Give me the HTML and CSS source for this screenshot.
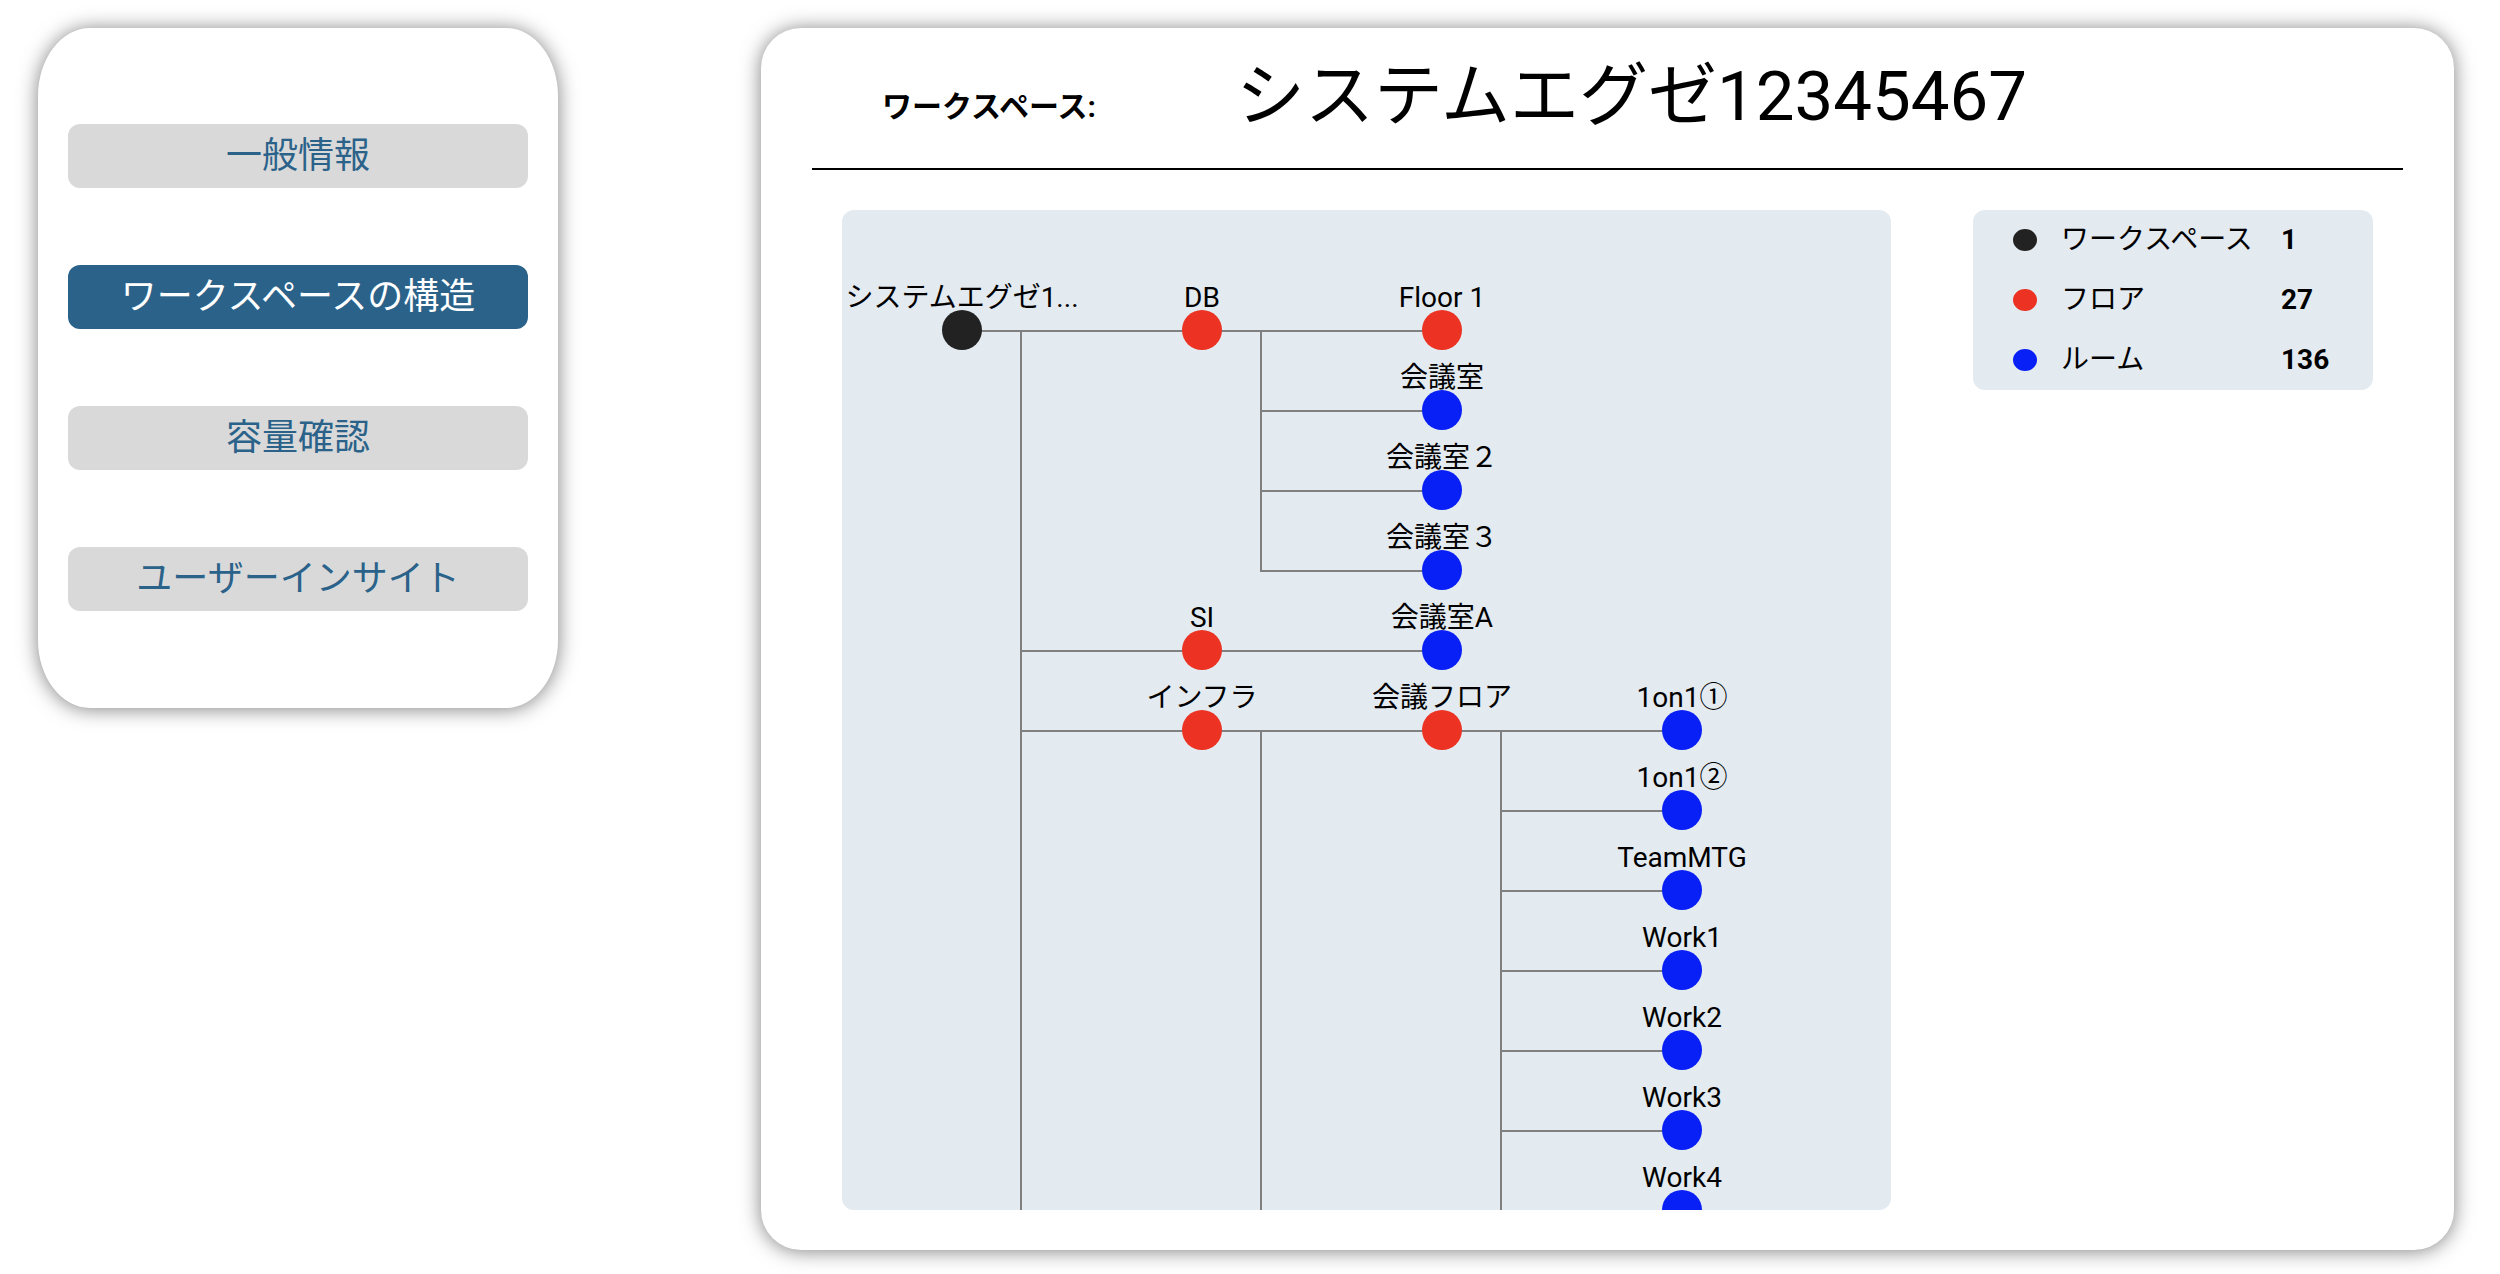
FILE: index.html
```html
<!DOCTYPE html>
<html lang="ja">
<head>
  <meta charset="utf-8">
  <meta name="viewport" content="width=device-width, initial-scale=1">
  <title>ワークスペースの構造</title>
  <link rel="stylesheet" href="styles.css">
</head>
<body>
  <div class="layout">
    <nav class="card menu">
      <button class="menu-item" type="button">一般情報</button>
      <button class="menu-item is-active" type="button" aria-current="page">ワークスペースの構造</button>
      <button class="menu-item" type="button">容量確認</button>
      <button class="menu-item" type="button">ユーザーインサイト</button>
    </nav>

    <main class="card panel">
      <header class="panel-header">
        <h2 class="panel-label">ワークスペース:</h2>
        <h1 class="panel-title">システムエグゼ12345467</h1>
      </header>

      <div class="panel-body">
        <section class="tree">
          <ul class="tree-root">
            <li>
              <div class="node workspace"><span class="label">システムエグゼ1...</span></div>
              <ul>
                <li>
                  <div class="node floor"><span class="label">DB</span></div>
                  <ul>
                    <li><div class="node floor"><span class="label">Floor 1</span></div></li>
                    <li><div class="node room"><span class="label">会議室</span></div></li>
                    <li><div class="node room"><span class="label">会議室２</span></div></li>
                    <li><div class="node room"><span class="label">会議室３</span></div></li>
                  </ul>
                </li>
                <li>
                  <div class="node floor"><span class="label">SI</span></div>
                  <ul>
                    <li><div class="node room"><span class="label">会議室A</span></div></li>
                  </ul>
                </li>
                <li class="continues">
                  <div class="node floor"><span class="label">インフラ</span></div>
                  <ul>
                    <li class="continues">
                      <div class="node floor"><span class="label">会議フロア</span></div>
                      <ul>
                        <li><div class="node room"><span class="label">1on1①</span></div></li>
                        <li><div class="node room"><span class="label">1on1②</span></div></li>
                        <li><div class="node room"><span class="label">TeamMTG</span></div></li>
                        <li><div class="node room"><span class="label">Work1</span></div></li>
                        <li><div class="node room"><span class="label">Work2</span></div></li>
                        <li><div class="node room"><span class="label">Work3</span></div></li>
                        <li><div class="node room"><span class="label">Work4</span></div></li>
                      </ul>
                    </li>
                  </ul>
                </li>
              </ul>
            </li>
          </ul>
        </section>

        <dl class="legend">
          <div class="legend-row workspace"><dt>ワークスペース</dt><dd>1</dd></div>
          <div class="legend-row floor"><dt>フロア</dt><dd>27</dd></div>
          <div class="legend-row room"><dt>ルーム</dt><dd>136</dd></div>
        </dl>
      </div>
    </main>
  </div>
</body>
</html>
```

FILE: styles.css
```css
:root {
  --primary: #2a628a;
  --surface: #e3eaf0;
  --line: #808080;
}

* {
  box-sizing: border-box;
}

body {
  margin: 0;
  background: #fff;
  color: #000;
  font-family: Roboto, "Noto Sans CJK JP", sans-serif;
  font-size: 28px;
}

ul,
dl,
dd,
h1,
h2 {
  margin: 0;
  padding: 0;
}

ul {
  list-style: none;
}

.layout {
  display: grid;
  grid-template-columns: minmax(0, 520fr) minmax(0, 1693fr);
  column-gap: 203px;
  align-items: start;
  padding: 28px 46px 24px 38px;
}

.card {
  background: #fff;
  box-shadow: 0 1px 20px rgba(0, 0, 0, 0.5);
}

/* Side menu */
.menu {
  display: flex;
  flex-direction: column;
  gap: 77px;
  padding: 96px 30px 97px;
  border-radius: 10%;
}

.menu-item {
  height: 64px;
  padding: 0;
  border: 0;
  border-radius: 12px;
  background: #d9d9d9;
  color: var(--primary);
  font: inherit;
  font-size: 36px;
  line-height: 64px;
  cursor: pointer;
}

.menu-item.is-active {
  background: var(--primary);
  color: #fff;
}

/* Main panel */
.panel {
  padding-bottom: 40px;
  border-radius: 40px;
}

.panel-header {
  display: flex;
  align-items: flex-start;
  gap: 140px;
  height: 142px;
  margin: 0 51px;
  padding: 16px 70px 0;
  border-bottom: 2px solid #000;
}

.panel-label {
  font-size: 30px;
  font-weight: 700;
  line-height: 126px;
}

.panel-title {
  font-size: 69px;
  font-weight: 400;
  line-height: 106px;
}

.panel-body {
  display: flex;
  align-items: flex-start;
  gap: 82px;
  padding: 40px 81px 0;
}

/* Structure tree */
.tree {
  flex: 1;
  min-width: 0;
  height: 1000px;
  padding-top: 60px;
  overflow: auto;
  border-radius: 12px;
  background: var(--surface);
  scrollbar-width: none;
}

.tree li {
  display: flex;
  align-items: flex-start;
  position: relative;
}

.tree li > ul {
  position: relative;
}

/* From the parent to the trunk */
.tree li > ul::before {
  content: "";
  position: absolute;
  top: 60px;
  left: -120px;
  width: 60px;
  height: 2px;
  background: var(--line);
}

/* From the trunk to the node */
.tree-root ul > li::before {
  content: "";
  position: absolute;
  top: 60px;
  left: -62px;
  width: 182px;
  height: 2px;
  background: var(--line);
}

/* Trunk down to the next sibling */
.tree-root ul > li:not(:last-child)::after,
.tree-root li.continues::after {
  content: "";
  position: absolute;
  top: 60px;
  bottom: -62px;
  left: -62px;
  width: 2px;
  background: var(--line);
}

.node {
  display: flex;
  flex: none;
  flex-direction: column;
  align-items: center;
  justify-content: flex-end;
  position: relative;
  z-index: 1;
  width: 240px;
  height: 80px;
}

.node::after {
  content: "";
  width: 40px;
  height: 40px;
  border-radius: 50%;
  background: var(--dot);
}

.label {
  line-height: 24px;
  white-space: nowrap;
}

.workspace {
  --dot: #222;
}

.floor {
  --dot: #ec3323;
}

.room {
  --dot: #081ff5;
}

/* Legend */
.legend {
  flex: none;
  width: 400px;
  border-radius: 12px;
  background: var(--surface);
}

.legend-row {
  display: grid;
  grid-template-columns: 24px 196px 1fr;
  column-gap: 24px;
  align-items: center;
  height: 60px;
  padding: 0 20px 0 40px;
  line-height: 40px;
}

.legend-row::before {
  content: "";
  height: 22px;
  border-radius: 50%;
  background: var(--dot);
}

.legend dd {
  font-weight: 700;
}
```
